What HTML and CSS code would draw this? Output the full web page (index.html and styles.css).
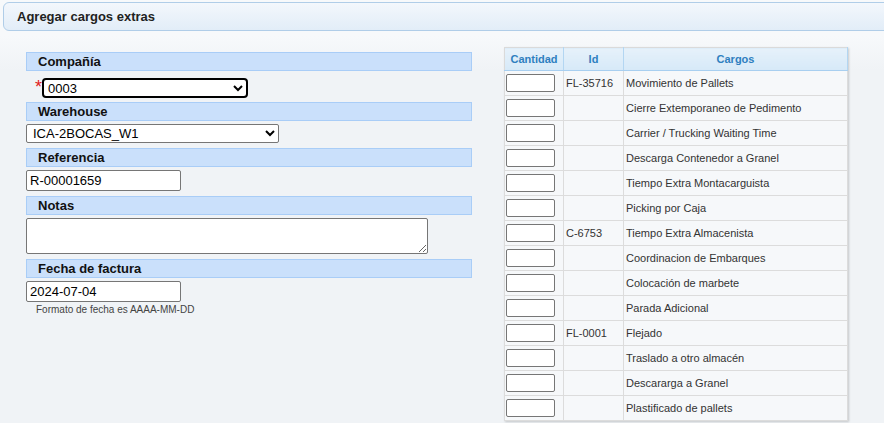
FILE: index.html
```html
<!DOCTYPE html>
<html lang="es">
<head>
<meta charset="utf-8">
<title>Agregar cargos extras</title>
<link rel="stylesheet" href="styles.css">
</head>
<body>
<div class="page">
  <div class="titlebar">Agregar cargos extras</div>
  <div class="main">
    <div class="form">
      <div class="field">
        <div class="field-head">Compañía</div>
        <div class="req-row">
          <span class="req">*</span>
          <select class="sel-company"><option>0003</option></select>
        </div>
      </div>
      <div class="field">
        <div class="field-head">Warehouse</div>
        <select class="sel-wh"><option>ICA-2BOCAS_W1</option></select>
      </div>
      <div class="field">
        <div class="field-head">Referencia</div>
        <input class="txt" type="text" value="R-00001659">
      </div>
      <div class="field">
        <div class="field-head">Notas</div>
        <textarea class="notes"></textarea>
      </div>
      <div class="field">
        <div class="field-head">Fecha de factura</div>
        <input class="txt" type="text" value="2024-07-04">
        <div class="hint">Formato de fecha es AAAA-MM-DD</div>
      </div>
    </div>
    <table class="charges">
      <thead>
        <tr><th class="c-qty">Cantidad</th><th class="c-id">Id</th><th class="c-name">Cargos</th></tr>
      </thead>
      <tbody>
        <tr><td class="q"><input type="text"></td><td>FL-35716</td><td>Movimiento de Pallets</td></tr>
        <tr><td class="q"><input type="text"></td><td></td><td>Cierre Extemporaneo de Pedimento</td></tr>
        <tr><td class="q"><input type="text"></td><td></td><td>Carrier / Trucking Waiting Time</td></tr>
        <tr><td class="q"><input type="text"></td><td></td><td>Descarga Contenedor a Granel</td></tr>
        <tr><td class="q"><input type="text"></td><td></td><td>Tiempo Extra Montacarguista</td></tr>
        <tr><td class="q"><input type="text"></td><td></td><td>Picking por Caja</td></tr>
        <tr><td class="q"><input type="text"></td><td>C-6753</td><td>Tiempo Extra Almacenista</td></tr>
        <tr><td class="q"><input type="text"></td><td></td><td>Coordinacion de Embarques</td></tr>
        <tr><td class="q"><input type="text"></td><td></td><td>Colocación de marbete</td></tr>
        <tr><td class="q"><input type="text"></td><td></td><td>Parada Adicional</td></tr>
        <tr><td class="q"><input type="text"></td><td>FL-0001</td><td>Flejado</td></tr>
        <tr><td class="q"><input type="text"></td><td></td><td>Traslado a otro almacén</td></tr>
        <tr><td class="q"><input type="text"></td><td></td><td>Descararga a Granel</td></tr>
        <tr><td class="q"><input type="text"></td><td></td><td>Plastificado de pallets</td></tr>
      </tbody>
    </table>
  </div>
</div>
</body>
</html>
```
FILE: styles.css
```css
html, body {
  margin: 0;
  padding: 0;
  overflow: hidden;
}
body {
  background: linear-gradient(#f7f9fb 0px, #f7f9fb 36px, #f0f3f6 70px, #f0f3f6 100%);
  font-family: "Liberation Sans", Arial, sans-serif;
  color: #222;
  width: 884px;
  height: 423px;
}
.page {
  padding-top: 2px;
}
.titlebar {
  margin-left: 3px;
  width: 900px;
  height: 27px;
  border: 1px solid #b0cde8;
  border-radius: 6px;
  background: linear-gradient(#f3f7fc, #e2edf8);
  font-size: 13px;
  font-weight: bold;
  color: #222;
  line-height: 27px;
  padding-left: 13px;
}
.main {
  display: flex;
  align-items: flex-start;
  gap: 32px;
  padding-left: 26px;
  margin-top: 16px;
}
.form {
  width: 446px;
  padding-top: 5px;
  display: flex;
  flex-direction: column;
}
.field {
  display: flex;
  flex-direction: column;
  align-items: flex-start;
}
.field-head {
  align-self: stretch;
  height: 17px;
  line-height: 17px;
  border: 1px solid #a9cdf7;
  background: #cae0fb;
  padding-left: 11px;
  font-size: 13px;
  font-weight: bold;
  color: #111;
}
.req-row {
  display: flex;
  align-items: flex-start;
  margin: 7px 0 4px 9px;
}
.req {
  color: #e02020;
  font-size: 18px;
  line-height: 18px;
  width: 7px;
}
select, input, textarea {
  font-family: "Liberation Sans", Arial, sans-serif;
  box-sizing: border-box;
  background: #fff;
  color: #000;
}
.sel-company {
  width: 206px;
  height: 20px;
  border: 2px solid #000;
  border-radius: 4px;
  font-size: 13px;
  padding: 0;
}
.sel-wh {
  width: 253px;
  height: 19px;
  margin: 3px 0 5px;
  border: 1px solid #767676;
  border-radius: 2px;
  font-size: 13px;
  padding: 0 2px;
}
.txt {
  width: 155px;
  height: 21px;
  margin: 3px 0 5px;
  border: 1px solid #767676;
  border-radius: 2px;
  font-size: 13px;
  padding: 1px 3px;
}
.notes {
  width: 402px;
  height: 36px;
  margin: 3px 0 5px;
  border: 1px solid #767676;
  border-radius: 2px;
  resize: both;
}
.hint {
  margin: -3px 0 0 10px;
  font-size: 10px;
  color: #444;
}
.charges {
  width: 344px;
  border-collapse: collapse;
  font-size: 11px;
  color: #333;
  background: #f6f8fa;
  box-shadow: 1px 1px 2px rgba(0, 0, 0, 0.18);
}
.charges th {
  height: 22px;
  padding: 0;
  background: linear-gradient(#e6f1fa, #d6e9f8);
  color: #2f7fc0;
  font-weight: bold;
  font-size: 11px;
  text-align: center;
  border-top: 1px solid #dadada;
  border-bottom: 1px solid #a8cff0;
  border-right: 1px solid #b3d6f2;
  border-left: 1px solid #dadada;
}
.charges th.c-qty { width: 58px; }
.charges th.c-id { width: 59px; border-left-color: #b3d6f2; }
.charges th.c-name { border-left-color: #b3d6f2; }
.charges td {
  height: 24px;
  padding: 0 0 0 2px;
  border: 1px solid #dcdcdc;
  vertical-align: middle;
  white-space: nowrap;
}
.charges td.q {
  padding: 0 0 0 1px;
}
.charges td input {
  display: block;
  width: 49px;
  height: 18px;
  border: 1px solid #767676;
  border-radius: 2px;
  padding: 0;
}
```
